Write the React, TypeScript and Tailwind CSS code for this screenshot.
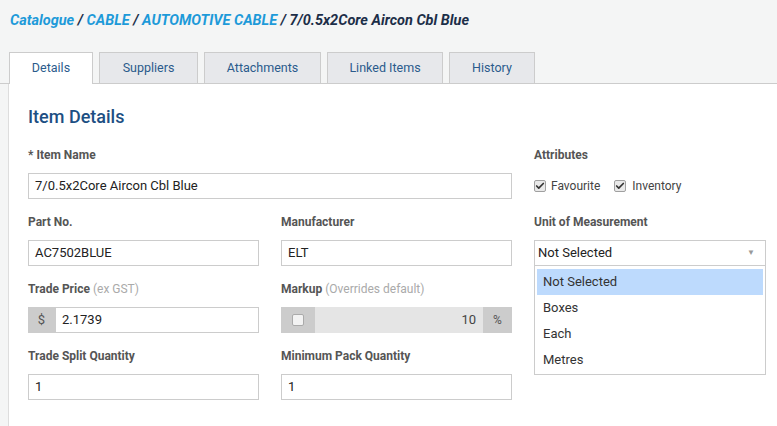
import { Check } from "lucide-react";

const tabs = [
  { label: "Details", w: "w-[84px]", active: true },
  { label: "Suppliers", w: "w-[99px]", active: false },
  { label: "Attachments", w: "w-[117px]", active: false },
  { label: "Linked Items", w: "w-[116px]", active: false },
  { label: "History", w: "w-[86px]", active: false },
];

const units = ["Not Selected", "Boxes", "Each", "Metres"];

function Label({ text, hint }: { text: string; hint?: string }) {
  return (
    <div className="h-[18px] leading-[18px] mb-[9px] text-[12px] font-bold text-[#555] whitespace-nowrap">
      {text}
      {hint && <span className="font-normal text-[#aaa]"> {hint}</span>}
    </div>
  );
}

function TextInput({ value }: { value: string }) {
  return (
    <div className="h-[26px] border border-[#ccc] bg-white pl-[6px] flex items-center text-[13px] text-[#222]">
      {value}
    </div>
  );
}

function Box({ checked }: { checked?: boolean }) {
  return (
    <span className="w-[12px] h-[12px] rounded-[2px] border border-[#a0a0a0] bg-[#e9e9e9] flex items-center justify-center">
      {checked && <Check size={10} strokeWidth={4} color="#333" />}
    </span>
  );
}

export default function App() {
  return (
    <div className="w-[777px] h-[426px] overflow-hidden bg-[#f4f5f5] font-['Roboto',sans-serif]">
      {/* breadcrumb */}
      <div className="h-[52px] pl-[10px] pt-[12px] text-[14.5px] leading-[18px] font-bold italic">
        <span className="text-[#1d9ad9]">Catalogue</span>
        <span className="text-[#1c2e48]"> / </span>
        <span className="text-[#1d9ad9]">CABLE</span>
        <span className="text-[#1c2e48]"> / </span>
        <span className="text-[#1d9ad9]">AUTOMOTIVE CABLE</span>
        <span className="text-[#1c2e48]"> / 7/0.5x2Core Aircon Cbl Blue</span>
      </div>

      {/* tabs */}
      <div className="flex items-end gap-[6px] h-[32px] pl-[9px] border-b border-[#ccc]">
        {tabs.map((t) => (
          <div
            key={t.label}
            className={
              t.active
                ? `${t.w} h-[32px] -mb-px bg-white border border-b-0 border-[#ccc] flex items-center justify-center text-[12.5px] text-[#2b5b8c]`
                : `${t.w} h-[31px] bg-[#e7e8eb] border border-b-0 border-[#ccc] flex items-center justify-center text-[12.5px] text-[#2b5b8c]`
            }
          >
            {t.label}
          </div>
        ))}
      </div>

      {/* panel */}
      <div className="ml-[8px] h-[400px] bg-white border-l border-[#ddd] pl-[19px] pt-[21px]">
        <h1 className="text-[18px] leading-[24px] font-medium text-[#1d4f83] mb-[17px]">Item Details</h1>

        <div className="grid grid-cols-[231px_231px_232px] gap-x-[22px] gap-y-[14px]">
          <div className="col-span-2">
            <Label text="* Item Name" />
            <TextInput value="7/0.5x2Core Aircon Cbl Blue" />
          </div>
          <div>
            <Label text="Attributes" />
            <div className="h-[26px] flex items-center text-[12px] text-[#444]">
              <Box checked />
              <span className="ml-[5px]">Favourite</span>
              <span className="ml-[14px]">
                <Box checked />
              </span>
              <span className="ml-[6px]">Inventory</span>
            </div>
          </div>

          <div>
            <Label text="Part No." />
            <TextInput value="AC7502BLUE" />
          </div>
          <div>
            <Label text="Manufacturer" />
            <TextInput value="ELT" />
          </div>
          <div className="relative">
            <Label text="Unit of Measurement" />
            <div className="h-[26px] border border-[#ccc] bg-white pl-[3px] pr-[10px] flex items-center justify-between text-[13px] text-[#222]">
              <span>Not Selected</span>
              <span className="text-[8px] text-[#999]">▼</span>
            </div>
            <div className="absolute left-0 right-0 top-[52px] z-10 bg-white border border-[#ccc] pt-[3px] pb-px px-[2px]">
              {units.map((u, i) => (
                <div
                  key={u}
                  className={
                    i === 0
                      ? "h-[26px] flex items-center pl-[6px] text-[13px] text-[#333] bg-[#bddafd]"
                      : "h-[26px] flex items-center pl-[6px] text-[13px] text-[#333]"
                  }
                >
                  {u}
                </div>
              ))}
            </div>
          </div>

          <div>
            <Label text="Trade Price" hint="(ex GST)" />
            <div className="h-[26px] flex">
              <div className="w-[27px] bg-[#ccc] flex items-center justify-center text-[13px] text-[#555]">$</div>
              <div className="flex-1 border border-[#ccc] bg-white pl-[6px] flex items-center text-[13px] text-[#222]">
                2.1739
              </div>
            </div>
          </div>
          <div>
            <Label text="Markup" hint="(Overrides default)" />
            <div className="h-[26px] flex">
              <div className="w-[34px] bg-[#ccc] flex items-center justify-center">
                <span className="w-[12px] h-[12px] rounded-[2px] border border-[#aaa] bg-[#f2f2f2]" />
              </div>
              <div className="flex-1 bg-[#e5e5e5] pr-[7px] flex items-center justify-end text-[13px] text-[#444]">10</div>
              <div className="w-[29px] bg-[#ccc] flex items-center justify-center text-[12px] text-[#555]">%</div>
            </div>
          </div>
          <div />

          <div>
            <Label text="Trade Split Quantity" />
            <TextInput value="1" />
          </div>
          <div>
            <Label text="Minimum Pack Quantity" />
            <TextInput value="1" />
          </div>
          <div />
        </div>
      </div>
    </div>
  );
}
